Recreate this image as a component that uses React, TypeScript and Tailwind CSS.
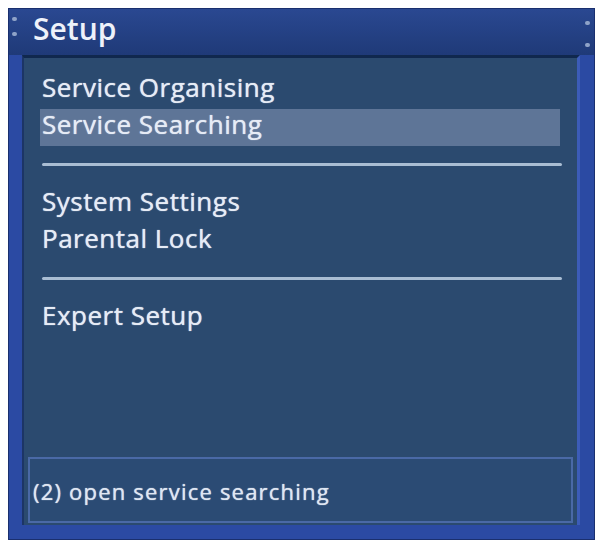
import React from "react";

const groups = [
  ["Service Organising", "Service Searching"],
  ["System Settings", "Parental Lock"],
  ["Expert Setup"],
];

const selected = "Service Searching";

export default function App() {
  return (
    <div className="w-[598px] h-[545px] bg-white pt-2 pl-2 font-['Open_Sans',sans-serif]">
      {/* outer frame */}
      <div className="w-[587px] h-[532px] flex flex-col bg-[#2b4aa3] border border-[#1a2f6e]">
        {/* title bar */}
        <div className="relative h-[46px] shrink-0 bg-gradient-to-b from-[#2a4891] to-[#1f3a78] pl-[24px] flex items-center">
          <span className="absolute left-[3px] top-[8px] w-[5px] h-[4px] rounded-full bg-[#8fa3c8]" />
          <span className="absolute left-[3px] top-[23px] w-[5px] h-[4px] rounded-full bg-[#8fa3c8]" />
          <span className="absolute right-[4px] top-[12px] w-[5px] h-[4px] rounded-full bg-[#8fa3c8]" />
          <span className="absolute right-[4px] top-[34px] w-[5px] h-[4px] rounded-full bg-[#8fa3c8]" />
          <span className="text-[30px] font-semibold text-[#eef2fa] leading-none pb-[6px]">Setup</span>
        </div>

        {/* body */}
        <div className="flex-1 flex pl-[13px] pr-[14px] pb-[14px]">
          <div className="flex-1 flex flex-col bg-[#2b4a6f] border-t-[3px] border-t-[#10284e] border-l-2 border-l-[#1c3566] border-r-[3px] border-r-[#3c5cb8]">
            <div className="flex-1 pl-[16px] pr-[17px] pt-[14px]">
              {groups.map((items, gi) => (
                <div key={gi}>
                  {gi > 0 && <div className="h-[3px] ml-[2px] mr-[-2px] mt-[17px] mb-[20px] bg-[#a9bdd3] rounded-full" />}
                  {items.map((label) => (
                    <div
                      key={label}
                      className={`h-[37px] pl-[2px] text-[26px] leading-[31px] tracking-[0.5px] text-[#e6ecf6] [text-shadow:0_0_1px_#e6ecf6] ${
                        label === selected ? "bg-[#5e7597]" : ""
                      }`}
                    >
                      {label}
                    </div>
                  ))}
                </div>
              ))}
            </div>

            {/* status box */}
            <div className="h-[66px] ml-[4px] mr-[4px] mb-[2px] border-2 border-[#4a69a6] bg-[#2b4b74] pl-[3px] flex items-center">
              <span className="text-[22px] tracking-[1.2px] text-[#dfe6f2] [text-shadow:0_0_1px_#dfe6f2] pt-[2px]">(2) open service searching</span>
            </div>
          </div>
        </div>
      </div>
    </div>
  );
}
